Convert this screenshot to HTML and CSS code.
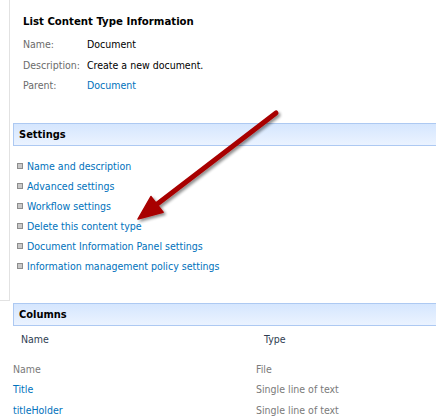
FILE: index.html
```html
<!DOCTYPE html>
<html>
<head>
<meta charset="utf-8">
<link rel="stylesheet" href="styles.css">
</head>
<body>
<div class="page">
  <div class="rail"></div>
  <div class="main">
    <div class="info">
      <div class="info-title">List Content Type Information</div>
      <div class="info-row"><span class="label">Name:</span><span class="value">Document</span></div>
      <div class="info-row"><span class="label">Description:</span><span class="value">Create a new document.</span></div>
      <div class="info-row"><span class="label">Parent:</span><a class="value link">Document</a></div>
    </div>

    <div class="section-head">Settings</div>
    <ul class="settings">
      <li><a class="link">Name and description</a></li>
      <li><a class="link">Advanced settings</a></li>
      <li><a class="link">Workflow settings</a></li>
      <li><a class="link">Delete this content type</a></li>
      <li><a class="link">Document Information Panel settings</a></li>
      <li><a class="link">Information management policy settings</a></li>
    </ul>

    <div class="section-head cols-head">Columns</div>
    <div class="grid-head">
      <span class="c1">Name</span><span class="c2">Type</span>
    </div>
    <div class="grid-row"><span class="c1 muted">Name</span><span class="c2 muted">File</span></div>
    <div class="grid-row"><a class="c1 link">Title</a><span class="c2 muted">Single line of text</span></div>
    <div class="grid-row"><a class="c1 link">titleHolder</a><span class="c2 muted">Single line of text</span></div>
  </div>

  <svg class="arrow" width="436" height="417" viewBox="0 0 436 417">
    <defs>
      <filter id="sh" x="-20%" y="-20%" width="140%" height="140%">
        <feGaussianBlur in="SourceAlpha" stdDeviation="1.5"/>
        <feOffset dx="2" dy="2" result="b"/>
        <feComponentTransfer><feFuncA type="linear" slope="0.45"/></feComponentTransfer>
        <feMerge><feMergeNode/><feMergeNode in="SourceGraphic"/></feMerge>
      </filter>
    </defs>
    <g filter="url(#sh)">
      <line x1="276" y1="113" x2="154" y2="206.5" stroke="#a80000" stroke-width="5" stroke-linecap="round"/>
      <polygon points="138,219 150.9,196.5 163.1,212.3" fill="#a80000" stroke="#a80000" stroke-width="1.5" stroke-linejoin="round"/>
    </g>
  </svg>
</div>
</body>
</html>
```
FILE: styles.css
```css
html, body {
  margin: 0;
  padding: 0;
  background: #fff;
}
body {
  font-family: "DejaVu Sans Condensed", "DejaVu Sans", Verdana, sans-serif;
  font-size: 10.5px;
  color: #000;
}
.page {
  position: relative;
  width: 436px;
  height: 417px;
  overflow: hidden;
  display: flex;
  align-items: flex-start;
}
.rail {
  flex: 0 0 9px;
  height: 300px;
  border-right: 1px solid #e2e2e2;
  border-bottom: 1px solid #e2e2e2;
}
.main {
  flex: 1;
  padding-left: 3px;
  min-width: 0;
}
.link {
  color: #0072bc;
  text-decoration: none;
}
.info {
  padding: 12px 0 0 10px;
}
.info-title {
  font-weight: bold;
  font-size: 11.3px;
  line-height: 20px;
  margin-bottom: 2px;
}
.info-row {
  display: flex;
  line-height: 20.5px;
}
.label {
  width: 64px;
  color: #6b6b6b;
}
.section-head {
  margin-top: 27.5px;
  height: 21px;
  line-height: 21px;
  padding-left: 5px;
  margin-right: -4px;
  font-weight: bold;
  font-size: 11px;
  border: 1px solid #adc9f2;
  border-right: none;
  background: linear-gradient(#d5e6fe, #ebf3ff);
}
.settings {
  list-style: none;
  margin: 10px 0 0 0;
  padding: 0;
}
.settings li {
  line-height: 20px;
  display: flex;
  align-items: center;
  padding-left: 4px;
}
.settings li::before {
  content: "";
  width: 4px;
  height: 4px;
  border: 1px solid #8d8d8d;
  background: #c8c8c8;
  margin-right: 4px;
}
.cols-head {
  margin-top: 27px;
}
.grid-head {
  display: flex;
  line-height: 20px;
  margin-top: 3px;
  padding-left: 8px;
  color: #2f3e52;
  margin-bottom: 9.5px;
}
.grid-head .c1 {
  width: 243px;
}
.grid-row {
  display: flex;
  line-height: 20.5px;
}
.grid-row .c1 {
  width: 243px;
}
.muted {
  color: #7a7a7a;
}
.arrow {
  position: absolute;
  left: 0;
  top: 0;
  pointer-events: none;
}
```
